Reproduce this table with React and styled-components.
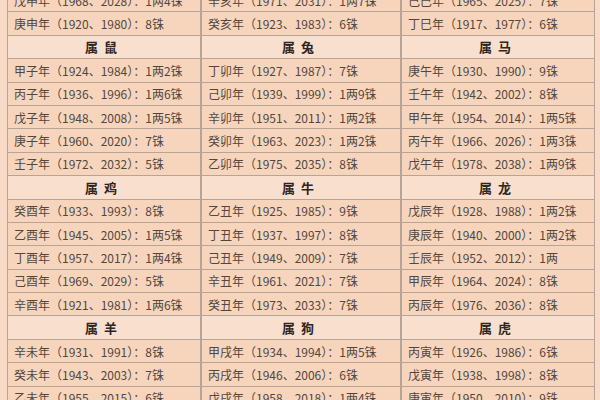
import React from "react";
import styled, { createGlobalStyle } from "styled-components";

const Global = createGlobalStyle`
  html, body { margin: 0; padding: 0; background: #f8dac6; overflow: hidden; }
  body { width: 600px; height: 400px; }
`;

const Page = styled.div`
  width: 600px;
  height: 400px;
  overflow: hidden;
  background: #f8dac6;
`;

const Table = styled.div`
  display: grid;
  grid-template-columns: 192px 198px 192px;
  grid-auto-rows: 22.4px;
  column-gap: 2px;
  row-gap: 1px;
  margin: -11px 0 0 7px;
  width: max-content;
  padding: 0 1px;
  background: #b5a497;
`;

const Cell = styled.div`
  display: flex;
  align-items: center;
  justify-content: ${(p) => (p.$head ? "center" : "flex-start")};
  padding: 0 6px;
  background: ${(p) => (p.$head ? "#f9dfcd" : "#f7d5bd")};
  font-family: "Noto Sans CJK SC", "Noto Sans", sans-serif;
  font-size: ${(p) => (p.$head ? "13px" : "12px")};
  font-weight: ${(p) => (p.$head ? 700 : 400)};
  letter-spacing: ${(p) => (p.$head ? "6px" : "0")};
  color: ${(p) => (p.$head ? "#2e2622" : "#51473f")};
  white-space: nowrap;
  overflow: hidden;
`;

const H = (t) => ({ head: true, t });

const rows = [
  ["戊申年（1968、2028）：1两4铢", "辛亥年（1971、2031）：1两7铢", "己巳年（1965、2025）：7铢"],
  ["庚申年（1920、1980）：8铢", "癸亥年（1923、1983）：6铢", "丁巳年（1917、1977）：6铢"],
  [H("属鼠"), H("属兔"), H("属马")],
  ["甲子年（1924、1984）：1两2铢", "丁卯年（1927、1987）：7铢", "庚午年（1930、1990）：9铢"],
  ["丙子年（1936、1996）：1两6铢", "己卯年（1939、1999）：1两9铢", "壬午年（1942、2002）：8铢"],
  ["戊子年（1948、2008）：1两5铢", "辛卯年（1951、2011）：1两2铢", "甲午年（1954、2014）：1两5铢"],
  ["庚子年（1960、2020）：7铢", "癸卯年（1963、2023）：1两2铢", "丙午年（1966、2026）：1两3铢"],
  ["壬子年（1972、2032）：5铢", "乙卯年（1975、2035）：8铢", "戊午年（1978、2038）：1两9铢"],
  [H("属鸡"), H("属牛"), H("属龙")],
  ["癸酉年（1933、1993）：8铢", "乙丑年（1925、1985）：9铢", "戊辰年（1928、1988）：1两2铢"],
  ["乙酉年（1945、2005）：1两5铢", "丁丑年（1937、1997）：8铢", "庚辰年（1940、2000）：1两2铢"],
  ["丁酉年（1957、2017）：1两4铢", "己丑年（1949、2009）：7铢", "壬辰年（1952、2012）：1两"],
  ["己酉年（1969、2029）：5铢", "辛丑年（1961、2021）：7铢", "甲辰年（1964、2024）：8铢"],
  ["辛酉年（1921、1981）：1两6铢", "癸丑年（1973、2033）：7铢", "丙辰年（1976、2036）：8铢"],
  [H("属羊"), H("属狗"), H("属虎")],
  ["辛未年（1931、1991）：8铢", "甲戌年（1934、1994）：1两5铢", "丙寅年（1926、1986）：6铢"],
  ["癸未年（1943、2003）：7铢", "丙戌年（1946、2006）：6铢", "戊寅年（1938、1998）：8铢"],
  ["乙未年（1955、2015）：6铢", "戊戌年（1958、2018）：1两4铢", "庚寅年（1950、2010）：9铢"],
];

export default function App() {
  return (
    <Page>
      <Global />
      <Table>
        {rows.flatMap((r, i) =>
          r.map((c, j) =>
            typeof c === "string" ? (
              <Cell key={`${i}-${j}`}>{c}</Cell>
            ) : (
              <Cell key={`${i}-${j}`} $head>
                {c.t}
              </Cell>
            )
          )
        )}
      </Table>
    </Page>
  );
}
